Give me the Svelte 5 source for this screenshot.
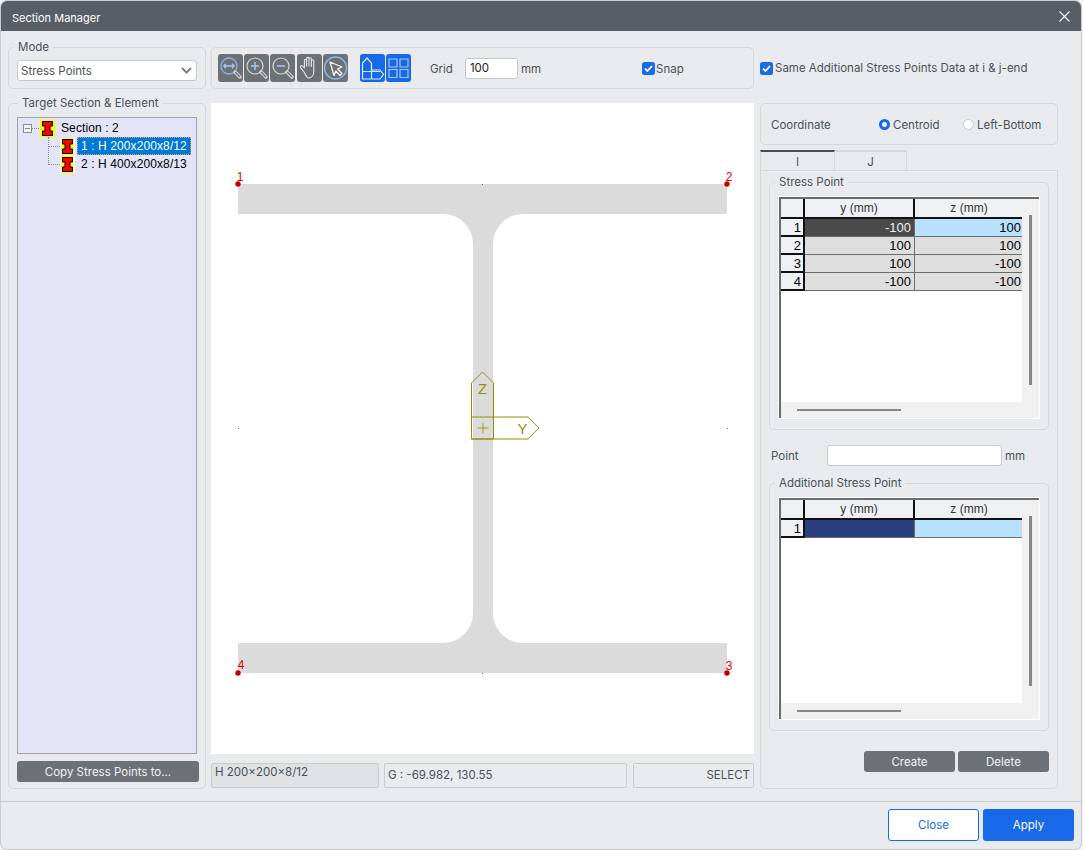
<script>
  // Section Manager dialog, Stress Points mode
  const stressPoints = [
    { y: -100, z: 100 },
    { y: 100, z: 100 },
    { y: 100, z: -100 },
    { y: -100, z: -100 }
  ];
  const corners = [
    { n: 1, x: 27, y: 81, lx: 29, ly: 78 },
    { n: 2, x: 516, y: 81, lx: 518, ly: 78 },
    { n: 3, x: 516, y: 570, lx: 518, ly: 567 },
    { n: 4, x: 27, y: 570, lx: 30, ly: 566 }
  ];
  // tick marks at the section's mid points
  const ticks = [[271, 81], [271, 570], [27, 325], [516, 325]];

  // I-section outline, canvas coordinates
  const outline =
    'M27 81H516V111H312A30 30 0 0 0 282 141V510A30 30 0 0 0 312 540H516V570H27V540H232A30 30 0 0 0 262 510V141A30 30 0 0 0 232 111H27Z';
</script>

{#snippet sectionIcon(root)}
  <svg class="section-icon" class:root-icon={root} width="15" height="17" viewBox="0 0 15 17">
    <rect width="15" height="17" fill={root ? '#ffff00' : '#fff'} />
    <rect x="1.500" width="12" height="17" fill="#ffff00" />
    <path d="M2.500 1.500H12.500V6H10V11H12.500V15.500H2.500V11H5V6H2.500Z" fill="#f00" stroke="#000" stroke-width="1" />
  </svg>
{/snippet}

{#snippet sheet(rows, active)}
  <div class="sheet">
    <div class="sheet-view">
      <table>
        <thead>
          <tr><th class="corner"></th><th>y (mm)</th><th>z (mm)</th></tr>
        </thead>
        <tbody>
          {#each rows as row, i}
            <tr>
              <th class="num">{i + 1}</th>
              <td class:cell-a={i === 0} class={i === 0 ? active : ''}>{row.y}</td>
              <td class:cell-b={i === 0}>{row.z}</td>
            </tr>
          {/each}
        </tbody>
      </table>
    </div>
    <div class="vbar"><span></span></div>
    <div class="hbar"><span></span></div>
  </div>
{/snippet}

{#snippet check()}
  <svg class="check" width="13" height="13" viewBox="0 0 13 13">
    <rect width="13" height="13" rx="2.5" fill="#1a6be6" />
    <path d="M3 6.600L5.400 9L10 4" fill="none" stroke="#fff" stroke-width="1.800" />
  </svg>
{/snippet}

<div class="window">
  <header class="titlebar">
    <span class="title">Section Manager</span>
    <svg width="11" height="11" viewBox="0 0 11 11">
      <path d="M.5 .5L10.500 10.500M10.500 .5L.5 10.500" stroke="#fff" stroke-width="1.100" />
    </svg>
  </header>

  <main class="content">
    <fieldset class="mode">
      <legend>Mode</legend>
      <div class="combo">
        <span>Stress Points</span>
        <svg width="11" height="7" viewBox="0 0 11 7">
          <path d="M1 1L5.500 5.500L10 1" fill="none" stroke="#7d8287" stroke-width="2" />
        </svg>
      </div>
    </fieldset>

    <div class="toolbar">
      <div class="tools">
        <button aria-label="Zoom fit">
          <svg viewBox="0 0 25 28">
            <circle cx="11" cy="12" r="8" fill="none" stroke="#8db4ea" stroke-width="1.300" />
            <path d="M5.500 12H16.500M5.500 12L8 9.800M5.500 12L8 14.200M16.500 12L14 9.800M16.500 12L14 14.200" fill="none" stroke="#a9c7f0" stroke-width="1.300" />
            <path d="M17 18L22 23" stroke="#d5d7da" stroke-width="3.400" stroke-linecap="round" />
            <path d="M17.600 18.600L21.600 22.600" stroke="#6c7176" stroke-width="1.400" stroke-linecap="round" />
          </svg>
        </button>
        <button aria-label="Zoom in">
          <svg viewBox="0 0 25 28">
            <circle cx="11" cy="12" r="8" fill="none" stroke="#d5d7da" stroke-width="1.200" />
            <path d="M7 12H15M11 8V16" stroke="#a9c7f0" stroke-width="1.500" />
            <path d="M17 18L22 23" stroke="#d5d7da" stroke-width="3.400" stroke-linecap="round" />
            <path d="M17.600 18.600L21.600 22.600" stroke="#6c7176" stroke-width="1.400" stroke-linecap="round" />
          </svg>
        </button>
        <button aria-label="Zoom out">
          <svg viewBox="0 0 25 28">
            <circle cx="11" cy="12" r="8" fill="none" stroke="#d5d7da" stroke-width="1.200" />
            <path d="M7 12H15" stroke="#a9c7f0" stroke-width="1.500" />
            <path d="M17 18L22 23" stroke="#d5d7da" stroke-width="3.400" stroke-linecap="round" />
            <path d="M17.600 18.600L21.600 22.600" stroke="#6c7176" stroke-width="1.400" stroke-linecap="round" />
          </svg>
        </button>
        <button class="gap-left" aria-label="Pan">
          <svg viewBox="0 0 25 28">
            <path
              d="M7 18L3.600 13.600C2.600 12.200 4.400 10.800 5.600 12L7.400 14V6.400C7.400 4.800 9.600 4.800 9.600 6.400V12V4.600C9.600 3 12 3 12 4.600V12V5C12 3.400 14.400 3.400 14.400 5V12.400V7C14.400 5.400 16.800 5.400 16.800 7V16.400C16.800 21 14.600 24 11.600 24C9.400 24 8.400 20 7 18Z"
              fill="#6c7176" stroke="#e6e7e9" stroke-width="1.100" stroke-linejoin="round"
            />
          </svg>
        </button>
        <button aria-label="Select">
          <svg viewBox="0 0 25 28">
            <circle cx="12.500" cy="14" r="11" fill="none" stroke="#8db4ea" stroke-width="1.400" />
            <path d="M7 8L19 13L14.600 15L19 19.500L17 21.500L12.800 17L11 21.500Z" fill="#6c7176" stroke="#f2f3f4" stroke-width="1.300" stroke-linejoin="round" />
          </svg>
        </button>
        <button class="blue gap-view" aria-label="Section view">
          <svg viewBox="0 0 25 28">
            <path d="M2.500 25V9L7 4L11.500 9V16H20L23.500 20.500L20 25Z" fill="none" stroke="#dbe8fb" stroke-width="1.200" />
            <path d="M2.500 17.500H20M11.500 9V25" fill="none" stroke="#dbe8fb" stroke-width="1.200" />
          </svg>
        </button>
        <button class="blue" aria-label="Grid view">
          <svg viewBox="0 0 25 28">
            <path d="M3 5H11V13H3ZM14 5H22V13H14ZM3 15.500H11V23.500H3ZM14 15.500H22V23.500H14Z" fill="none" stroke="#a9c7f5" stroke-width="1.200" />
          </svg>
        </button>
      </div>
      <span class="grid-label">Grid</span>
      <input class="grid-input" value="100" />
      <span class="unit">mm</span>
      <label class="snap">{@render check()}<span>Snap</span></label>
    </div>

    <label class="same">{@render check()}<span>Same Additional Stress Points Data at i &amp; j-end</span></label>

    <fieldset class="target">
      <legend>Target Section &amp; Element</legend>
      <div class="tree">
        <div class="tree-row root">
          <span class="expander"></span>
          <span class="dash"></span>
          {@render sectionIcon(true)}
          <span class="tree-text root-text">Section : 2</span>
        </div>
        <div class="tree-row child">
          <span class="elbow"></span>
          {@render sectionIcon(false)}
          <span class="tree-text selected">1 : H 200x200x8/12</span>
        </div>
        <div class="tree-row child">
          <span class="elbow tall"></span>
          {@render sectionIcon(false)}
          <span class="tree-text">2 : H 400x200x8/13</span>
        </div>
      </div>
      <button class="dark copy">Copy Stress Points to...</button>
    </fieldset>

    <section class="center">
      <div class="canvas">
        <svg width="543" height="651" viewBox="0 0 543 651">
          <path d={outline} fill="#dbdbdb" />
          {#each ticks as [x, y]}
            <rect {x} {y} width="1" height="1" fill="#f22" />
          {/each}
          <path
            d="M260.500 336V280L271.500 269L282.500 280V336ZM260.500 314H317L328 325L317 336H260.500"
            fill="none" stroke="#998f00" stroke-width="1"
          />
          <text x="271.500" y="291" class="axis">Z</text>
          <text x="311.500" y="331" class="axis">Y</text>
          <path d="M266.500 325H277.500M272 319.500V330.500" stroke="#a89a10" stroke-width="1" />
          {#each corners as c}
            <circle cx={c.x} cy={c.y} r="2.700" fill="#c00000" />
            <text x={c.lx} y={c.ly} class="pt">{c.n}</text>
          {/each}
        </svg>
      </div>
      <div class="status">
        <span class="stat shaded">H 200×200×8/12</span>
        <span class="stat coords">G : -69.982, 130.55</span>
        <span class="stat mode-state">SELECT</span>
      </div>
    </section>

    <section class="side">
      <div class="coordinate">
        <span class="coord-label">Coordinate</span>
        <label class="radio on"><i></i>Centroid</label>
        <label class="radio"><i></i>Left-Bottom</label>
      </div>
      <div class="tabs">
        <span class="tab active">I</span>
        <span class="tab">J</span>
      </div>
      <div class="pane">
        <fieldset class="grid-group">
          <legend>Stress Point</legend>
          {@render sheet(stressPoints, 'cell-dark')}
        </fieldset>
        <div class="point">
          <span class="point-label">Point</span>
          <input class="point-input" />
          <span class="unit">mm</span>
        </div>
        <fieldset class="grid-group">
          <legend>Additional Stress Point</legend>
          {@render sheet([{ y: '', z: '' }], 'cell-navy')}
        </fieldset>
        <div class="actions">
          <button class="dark action">Create</button>
          <button class="dark action">Delete</button>
        </div>
      </div>
    </section>
  </main>

  <footer class="footer">
    <button class="btn-close">Close</button>
    <button class="btn-apply">Apply</button>
  </footer>
</div>

<style>
  :global(body) {
    background: #f4f5f6;
    font-family: Inter, "Noto Sans", sans-serif;
    font-size: 11.5px;
    color: #4b5157;
  }

  .window {
    width: 1080px;
    height: 848px;
    margin: 1px;
    display: flex;
    flex-direction: column;
    background: #e8eaed;
    border-radius: 6px;
    box-shadow: 0 0 0 1px #c9cbce;
    overflow: hidden;
  }

  .titlebar {
    height: 30px;
    flex: none;
    display: flex;
    align-items: center;
    justify-content: space-between;
    padding: 0 11px;
    background: #585e66;
    color: #fff;
  }

  .title {
    font-size: 11px;
    padding-top: 3px;
  }

  .content {
    flex: 1;
    display: grid;
    grid-template-columns: 198px 543px 298px;
    grid-template-rows: 49px 693px;
    column-gap: 5px;
    row-gap: 7px;
    padding: 9px 0 0 7px;
    box-sizing: border-box;
  }

  fieldset {
    margin: 0;
    min-width: 0;
    box-sizing: border-box;
    border: 1px solid #d3d6da;
    border-radius: 5px;
  }

  legend {
    padding: 0 4px;
    height: 14px;
    line-height: 14px;
    color: #4b5157;
  }

  .mode {
    padding: 0 8px;
  }

  .mode legend {
    margin-left: -3px;
  }

  .combo {
    height: 21px;
    width: 180px;
    margin-top: 6px;
    box-sizing: border-box;
    display: flex;
    align-items: center;
    justify-content: space-between;
    padding: 0 4px 0 3px;
    background: #fff;
    border: 1px solid #c5c9ce;
    border-radius: 3px;
  }

  .toolbar {
    margin-top: 7px;
    height: 42px;
    box-sizing: border-box;
    display: flex;
    align-items: center;
    padding-left: 6px;
    border: 1px solid #d3d6da;
    border-radius: 5px;
  }

  .tools {
    display: flex;
    gap: 1px;
  }

  .tools button {
    width: 25px;
    height: 28px;
    padding: 0;
    border: 0;
    border-radius: 3px;
    background: #6c7176;
  }

  .tools svg {
    display: block;
    width: 25px;
    height: 28px;
  }

  .tools .gap-left {
    margin-left: 1px;
  }

  .tools .blue {
    background: #1769e8;
  }

  .tools .gap-view {
    margin-left: 11px;
  }

  .grid-label {
    margin-left: 19px;
    padding-top: 1px;
  }

  .grid-input {
    width: 53px;
    height: 21px;
    margin-left: 12px;
    padding: 0 4px;
    box-sizing: border-box;
    border: 1px solid #c5c9ce;
    border-radius: 3px;
    font: inherit;
    color: #222;
    outline: none;
  }

  .toolbar .unit {
    padding-top: 1px;
  }

  .unit {
    margin-left: 3px;
  }

  .snap {
    margin-left: 101px;
    display: flex;
    align-items: center;
    gap: 1px;
  }

  .snap span {
    padding-top: 1px;
  }

  .same {
    margin: 7px 0 0 1px;
    height: 42px;
    display: flex;
    align-items: center;
    gap: 2px;
    white-space: nowrap;
  }

  .check {
    flex: none;
  }

  .target {
    display: flex;
    flex-direction: column;
    padding: 0 6px 6px 8px;
  }

  .target legend {
    margin-left: 1px;
  }

  .tree {
    height: 637px;
    width: 180px;
    margin-top: 7px;
    box-sizing: border-box;
    padding-top: 1px;
    background: #e4e4f8;
    border: 1px solid #a3a3a3;
    font-family: "Liberation Sans", Arial, sans-serif;
    font-size: 12px;
    letter-spacing: 0.1px;
    color: #000;
    flex: none;
  }

  .tree-row {
    height: 18px;
    display: flex;
    align-items: center;
  }

  .expander {
    width: 9px;
    height: 9px;
    margin-left: 5px;
    box-sizing: border-box;
    border: 1px solid #8a8a8a;
    background: linear-gradient(#8a8a8a, #8a8a8a) center / 5px 1px no-repeat, #f3f3f3;
  }

  .dash {
    width: 9px;
    border-top: 1px dotted #8a8a8a;
  }

  .section-icon {
    flex: none;
  }

  .root-icon {
    margin-left: -1px;
  }

  .root-text {
    margin-left: 2px;
  }

  .child {
    padding-left: 30px;
  }

  .elbow {
    width: 11px;
    height: 9px;
    align-self: flex-start;
    border-left: 1px dotted #8a8a8a;
    border-bottom: 1px dotted #8a8a8a;
  }

  .elbow.tall {
    height: 18px;
    margin-top: -9px;
  }

  .tree-text {
    padding: 0 3px;
    line-height: 16px;
    border: 1px solid transparent;
    white-space: nowrap;
  }

  .child .tree-text {
    margin-left: 2px;
  }

  .selected {
    background: #0078d7;
    color: #fff;
    border: 1px dotted #e8a33d;
  }

  .dark {
    border: 0;
    border-radius: 3px;
    background: #6b7176;
    color: #f1f2f3;
    font: inherit;
    padding: 0;
  }

  .copy {
    height: 21px;
    width: 182px;
    margin-top: 7px;
    flex: none;
  }

  .center {
    margin-top: 7px;
    display: flex;
    flex-direction: column;
  }

  .canvas {
    height: 651px;
    background: #fff;
  }

  .canvas svg {
    display: block;
  }

  .axis {
    font: 15px "Liberation Sans", Arial, sans-serif;
    fill: #998f00;
    text-anchor: middle;
  }

  .pt {
    font: 12px "Liberation Sans", Arial, sans-serif;
    fill: #e00000;
    text-anchor: middle;
  }

  .status {
    margin-top: 9px;
    display: flex;
    gap: 5px;
  }

  .stat {
    height: 25px;
    box-sizing: border-box;
    padding: 0 3px 1px;
    display: flex;
    align-items: center;
    border: 1px solid #c8cbd0;
    border-radius: 2px;
  }

  .shaded {
    width: 168px;
    background: #dfe1e5;
    align-items: flex-start;
    padding-top: 1px;
  }

  .coords {
    width: 243px;
  }

  .mode-state {
    width: 121px;
    margin-left: 1px;
    justify-content: flex-end;
  }

  .side {
    margin: 7px 0 0 1px;
    width: 298px;
    display: flex;
    flex-direction: column;
  }

  .coordinate {
    height: 42px;
    flex: none;
    box-sizing: border-box;
    display: flex;
    align-items: center;
    padding: 1px 0 0 10px;
    border: 1px solid #d3d6da;
    border-radius: 5px;
  }

  .coord-label {
    width: 108px;
  }

  .radio {
    display: flex;
    align-items: center;
    gap: 3px;
    width: 84px;
    white-space: nowrap;
  }

  .radio i {
    width: 11px;
    height: 11px;
    box-sizing: border-box;
    border-radius: 50%;
    background: #fff;
    border: 1px solid #c5c9ce;
  }

  .radio.on i {
    border: 3px solid #1769e8;
  }

  .tabs {
    display: flex;
    margin-top: 5px;
    height: 20px;
    flex: none;
  }

  .tab {
    width: 72px;
    box-sizing: border-box;
    display: flex;
    align-items: center;
    justify-content: center;
    padding-top: 1px;
    border-top: 2px solid #d3d6da;
    border-right: 1px solid #d3d6da;
  }

  .tab.active {
    width: 75px;
    border-top-color: #4a4f55;
    border-left: 1px solid #d3d6da;
  }

  .pane {
    height: 619px;
    flex: none;
    box-sizing: border-box;
    padding: 4px 8px 0;
    border: 1px solid #d3d6da;
    border-radius: 0 0 5px 5px;
  }

  .grid-group {
    height: 255px;
    padding: 7px 8px 0;
  }

  .grid-group legend {
    margin-left: -3px;
  }

  .sheet {
    width: 262px;
    height: 223px;
    box-sizing: border-box;
    display: grid;
    grid-template-columns: 1fr 17px;
    grid-template-rows: 1fr 16px;
    background: #f0f0f0;
    border: 1px solid #fff;
    box-shadow: inset 2px 2px 0 #6b6b6b;
    padding: 2px 0 0 2px;
  }

  .sheet-view {
    background: #fff;
    overflow: hidden;
  }

  table {
    width: 242px;
    table-layout: fixed;
    border-collapse: separate;
    border-spacing: 0;
    font: 12px "Liberation Sans", Arial, sans-serif;
    color: #000;
  }

  thead th {
    height: 20px;
    padding: 0 0 1px;
    box-sizing: border-box;
    font-weight: 400;
    font-size: 12px;
    background: #eff0f4;
    color: #333;
    border-right: 2px solid #111;
    border-bottom: 2px solid #111;
  }

  thead th:first-child,
  .num {
    width: 24px;
  }

  thead th:nth-child(2) {
    width: 110px;
  }

  thead th:last-child {
    width: 108px;
    border-right: 0;
  }

  .num {
    height: 18px;
    padding: 0 2px 0 0;
    box-sizing: border-box;
    text-align: right;
    font-weight: 400;
    font-size: 13px;
    background: #eff0f4;
    border-right: 2px solid #111;
    border-bottom: 2px solid #111;
  }

  td {
    height: 18px;
    padding: 0 3px 0 0;
    box-sizing: border-box;
    text-align: right;
    font-size: 13px;
    background: #dedede;
    border-right: 1px solid #6b6b6b;
    border-bottom: 1px solid #6b6b6b;
  }

  td:last-child {
    padding-right: 2px;
    border-right: 0;
  }

  td.cell-a.cell-dark {
    background: #4a4a4a;
    color: #eee;
  }

  td.cell-a.cell-navy {
    background: #2a3f7e;
  }

  td.cell-b {
    background: #b8e0ff;
  }

  .vbar {
    background: #f0f0f0;
  }

  .vbar span {
    display: block;
    width: 3px;
    height: 170px;
    margin: 16px 0 0 7px;
    background: #868686;
  }

  .hbar {
    grid-column: 1 / 3;
    background: #f0f0f0;
    padding: 7px 0 0 16px;
  }

  .hbar span {
    display: block;
    width: 104px;
    height: 2px;
    background: #868686;
  }

  .point {
    height: 21px;
    margin: 15px 0 10px;
    display: flex;
    align-items: center;
    padding-left: 2px;
  }

  .point-label {
    width: 56px;
  }

  .point-input {
    width: 175px;
    height: 21px;
    box-sizing: border-box;
    border: 1px solid #c5c9ce;
    border-radius: 3px;
    outline: none;
  }

  .actions {
    margin-top: 20px;
    display: flex;
    justify-content: flex-end;
    gap: 3px;
  }

  .action {
    width: 91px;
    height: 21px;
  }

  .footer {
    flex: 1;
    display: flex;
    justify-content: flex-end;
    gap: 4px;
    padding: 7px 7px 0 0;
    margin-top: 12px;
    border-top: 1px solid #c8cbd0;
  }

  .footer button {
    width: 91px;
    height: 32px;
    border-radius: 3px;
    font: inherit;
  }

  .btn-close {
    background: #fff;
    color: #1769e8;
    border: 1px solid #1769e8;
  }

  .btn-apply {
    background: #1769e8;
    color: #fff;
    border: 0;
  }
</style>
